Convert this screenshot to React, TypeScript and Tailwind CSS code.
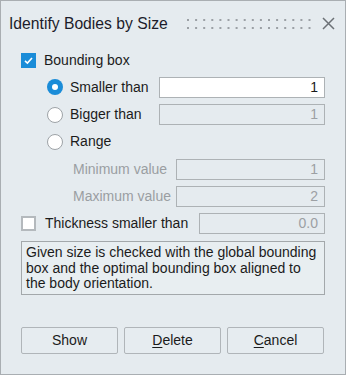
import React from "react";

function CheckBox({ checked }: { checked: boolean }) {
  if (checked) {
    return (
      <div className="w-[15px] h-[15px] bg-[#1a8cd8] flex items-center justify-center shrink-0">
        <svg width="11" height="11" viewBox="0 0 11 11">
          <path d="M2 5.8 L4.4 8 L9 3" fill="none" stroke="#ffffff" strokeWidth="1.6" />
        </svg>
      </div>
    );
  }
  return <div className="w-[15px] h-[15px] bg-white border-2 border-[#b4b9bd] shrink-0" />;
}

function Radio({ checked }: { checked: boolean }) {
  if (checked) {
    return (
      <div className="w-[16px] h-[16px] rounded-full bg-[#1a8cd8] flex items-center justify-center shrink-0">
        <div className="w-[6px] h-[6px] rounded-full bg-white" />
      </div>
    );
  }
  return <div className="w-[16px] h-[16px] rounded-full bg-white border border-[#9ea3a7] shrink-0" />;
}

function Field({ value, enabled, w }: { value: string; enabled: boolean; w: string }) {
  return (
    <div
      className={
        "h-[21px] border border-[#adb2b5] flex items-center justify-end pr-[6px] text-[14px] " +
        w +
        (enabled ? " bg-white text-[#1a1a1a]" : " bg-[#e5ebef] text-[#9ca0a4]")
      }
    >
      {value}
    </div>
  );
}

export default function App() {
  return (
    <div
      className="w-[346px] h-[375px] border border-[#a9aeb2] bg-[#e5ebef] flex flex-col text-[14px] text-[#1b1b1b]"
      style={{ fontFamily: '"Liberation Sans", Arial, sans-serif' }}
    >
      <div className="h-[45.4px] flex items-center pl-[8px] pr-[10px] shrink-0">
        <div className="text-[15.7px] text-[#1c1c2a]">Identify Bodies by Size</div>
        <svg className="ml-[19px]" width="124" height="12" viewBox="0 0 124 12">
          {Array.from({ length: 16 }).map((_, i) => (
            <React.Fragment key={i}>
              <rect x={i * 8.1} y={1} width="2" height="2" fill="#9ba0a5" />
              <rect x={i * 8.1} y={9} width="2" height="2" fill="#9ba0a5" />
            </React.Fragment>
          ))}
        </svg>
        <svg className="ml-auto" width="13" height="13" viewBox="0 0 13 13">
          <path d="M1 1 L12 12 M12 1 L1 12" stroke="#6c7176" strokeWidth="1.5" />
        </svg>
      </div>

      <div className="pl-[20px] pr-[20px] flex flex-col">
        <div className="h-[27.25px] flex items-center gap-[8px]">
          <CheckBox checked />
          <span>Bounding box</span>
        </div>
        <div className="h-[27.25px] flex items-center pl-[26px]">
          <Radio checked />
          <span className="ml-[7px]">Smaller than</span>
          <div className="ml-auto">
            <Field value="1" enabled w="w-[166px]" />
          </div>
        </div>
        <div className="h-[27.25px] flex items-center pl-[26px]">
          <Radio checked={false} />
          <span className="ml-[7px]">Bigger than</span>
          <div className="ml-auto">
            <Field value="1" enabled={false} w="w-[166px]" />
          </div>
        </div>
        <div className="h-[27.25px] flex items-center pl-[26px]">
          <Radio checked={false} />
          <span className="ml-[7px]">Range</span>
        </div>
        <div className="h-[27.25px] flex items-center pl-[52px]">
          <span className="text-[#9a9ea2]">Minimum value</span>
          <div className="ml-auto">
            <Field value="1" enabled={false} w="w-[149px]" />
          </div>
        </div>
        <div className="h-[27.25px] flex items-center pl-[52px]">
          <span className="text-[#9a9ea2]">Maximum value</span>
          <div className="ml-auto">
            <Field value="2" enabled={false} w="w-[149px]" />
          </div>
        </div>
        <div className="h-[27.25px] flex items-center gap-[9px]">
          <CheckBox checked={false} />
          <span>Thickness smaller than</span>
          <div className="ml-auto">
            <Field value="0.0" enabled={false} w="w-[126px]" />
          </div>
        </div>

        <div className="mt-[4px] h-[54px] border border-[#a3a8ab] bg-[#e8eef1] pl-[4px] pr-[4px] pt-[3px] leading-[15.6px] text-[14px] text-[#1b1b1b]">
          Given size is checked with the global bounding box and the optimal bounding box aligned to the body orientation.
        </div>

        <div className="mt-[32px] flex gap-[6px]">
          <button className="w-[97px] h-[27px] border border-[#b0b5b9] rounded-[2px] bg-[#e6ecf0] text-[14px] text-[#1b1b1b]">
            Show
          </button>
          <button className="w-[97px] h-[27px] border border-[#b0b5b9] rounded-[2px] bg-[#e6ecf0] text-[14px] text-[#1b1b1b]">
            <span className="underline underline-offset-2">D</span>elete
          </button>
          <button className="w-[97px] h-[27px] border border-[#b0b5b9] rounded-[2px] bg-[#e6ecf0] text-[14px] text-[#1b1b1b]">
            <span className="underline underline-offset-2">C</span>ancel
          </button>
        </div>
      </div>
    </div>
  );
}
